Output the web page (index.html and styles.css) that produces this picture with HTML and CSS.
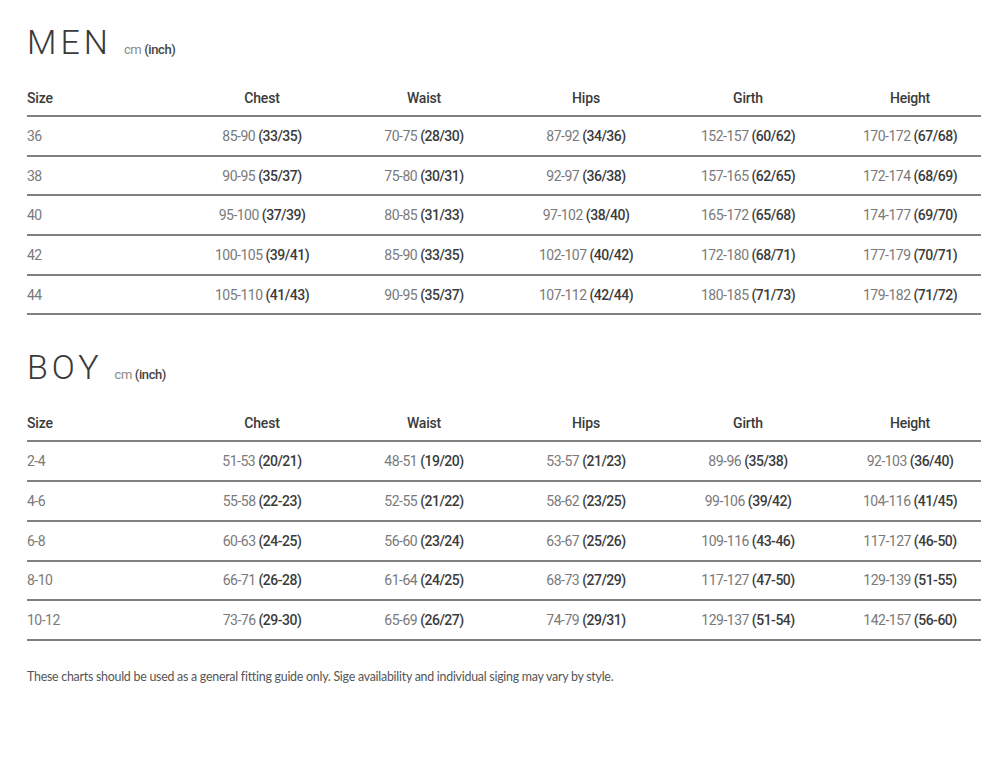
FILE: index.html
```html
<!DOCTYPE html>
<html>
<head>
<meta charset="utf-8">
<link rel="stylesheet" href="styles.css">
</head>
<body>
<div class="page">
  <section class="chart men">
    <h2 class="title"><span class="name">MEN</span><span class="unit">cm <b>(inch)</b></span></h2>
    <div class="table">
      <div class="row head"><div class="c size">Size</div><div class="c">Chest</div><div class="c">Waist</div><div class="c">Hips</div><div class="c">Girth</div><div class="c last">Height</div></div>
      <div class="row"><div class="c size">36</div><div class="c">85-90 <b>(33/35)</b></div><div class="c">70-75 <b>(28/30)</b></div><div class="c">87-92 <b>(34/36)</b></div><div class="c">152-157 <b>(60/62)</b></div><div class="c last">170-172 <b>(67/68)</b></div></div>
      <div class="row"><div class="c size">38</div><div class="c">90-95 <b>(35/37)</b></div><div class="c">75-80 <b>(30/31)</b></div><div class="c">92-97 <b>(36/38)</b></div><div class="c">157-165 <b>(62/65)</b></div><div class="c last">172-174 <b>(68/69)</b></div></div>
      <div class="row"><div class="c size">40</div><div class="c">95-100 <b>(37/39)</b></div><div class="c">80-85 <b>(31/33)</b></div><div class="c">97-102 <b>(38/40)</b></div><div class="c">165-172 <b>(65/68)</b></div><div class="c last">174-177 <b>(69/70)</b></div></div>
      <div class="row"><div class="c size">42</div><div class="c">100-105 <b>(39/41)</b></div><div class="c">85-90 <b>(33/35)</b></div><div class="c">102-107 <b>(40/42)</b></div><div class="c">172-180 <b>(68/71)</b></div><div class="c last">177-179 <b>(70/71)</b></div></div>
      <div class="row"><div class="c size">44</div><div class="c">105-110 <b>(41/43)</b></div><div class="c">90-95 <b>(35/37)</b></div><div class="c">107-112 <b>(42/44)</b></div><div class="c">180-185 <b>(71/73)</b></div><div class="c last">179-182 <b>(71/72)</b></div></div>
    </div>
  </section>
  <section class="chart boy">
    <h2 class="title"><span class="name">BOY</span><span class="unit">cm <b>(inch)</b></span></h2>
    <div class="table">
      <div class="row head"><div class="c size">Size</div><div class="c">Chest</div><div class="c">Waist</div><div class="c">Hips</div><div class="c">Girth</div><div class="c last">Height</div></div>
      <div class="row"><div class="c size">2-4</div><div class="c">51-53 <b>(20/21)</b></div><div class="c">48-51 <b>(19/20)</b></div><div class="c">53-57 <b>(21/23)</b></div><div class="c">89-96 <b>(35/38)</b></div><div class="c last">92-103 <b>(36/40)</b></div></div>
      <div class="row"><div class="c size">4-6</div><div class="c">55-58 <b>(22-23)</b></div><div class="c">52-55 <b>(21/22)</b></div><div class="c">58-62 <b>(23/25)</b></div><div class="c">99-106 <b>(39/42)</b></div><div class="c last">104-116 <b>(41/45)</b></div></div>
      <div class="row"><div class="c size">6-8</div><div class="c">60-63 <b>(24-25)</b></div><div class="c">56-60 <b>(23/24)</b></div><div class="c">63-67 <b>(25/26)</b></div><div class="c">109-116 <b>(43-46)</b></div><div class="c last">117-127 <b>(46-50)</b></div></div>
      <div class="row"><div class="c size">8-10</div><div class="c">66-71 <b>(26-28)</b></div><div class="c">61-64 <b>(24/25)</b></div><div class="c">68-73 <b>(27/29)</b></div><div class="c">117-127 <b>(47-50)</b></div><div class="c last">129-139 <b>(51-55)</b></div></div>
      <div class="row"><div class="c size">10-12</div><div class="c">73-76 <b>(29-30)</b></div><div class="c">65-69 <b>(26/27)</b></div><div class="c">74-79 <b>(29/31)</b></div><div class="c">129-137 <b>(51-54)</b></div><div class="c last">142-157 <b>(56-60)</b></div></div>
    </div>
  </section>
  <p class="note">These charts should be used as a general fitting guide only. Sige availability and individual siging may vary by style.</p>
</div>
</body>
</html>
```
FILE: styles.css
```css
html, body {
  margin: 0;
  padding: 0;
  background: #ffffff;
}
.page {
  width: 954px;
  padding: 22px 0 0 27px;
  font-family: Roboto, "Open Sans", sans-serif;
  color: #333;
}
.chart {
  margin: 0;
}
.boy {
  margin-top: 32px;
}
.title {
  margin: 0 0 18px 0;
  display: flex;
  align-items: baseline;
  font-weight: 300;
  height: 40px;
}
.name {
  font-family: Roboto, sans-serif;
  font-weight: 300;
  font-size: 34px;
  letter-spacing: 4px;
  color: #3a3a3a;
  line-height: 40px;
}
.unit {
  margin-left: 12px;
  font-size: 13px;
  color: #8a8a8a;
  font-weight: 400;
  letter-spacing: -0.4px;
}
.unit b {
  color: #444;
  font-weight: 500;
}
.table {
  display: flex;
  flex-direction: column;
}
.row {
  display: grid;
  grid-template-columns: 154px repeat(4, 162px) 152px;
  align-items: center;
  height: 37.7px;
  border-bottom: 2px solid #808080;
  font-size: 14px;
  color: #7a7a7a;
  letter-spacing: -0.5px;
}
.row.head {
  height: 35px;
  color: #3a3a3a;
  font-weight: 500;
  letter-spacing: -0.2px;
}
.c {
  text-align: center;
  white-space: nowrap;
}
.c.size {
  text-align: left;
}
.c.last {
  padding-left: 10px;
}
.c b {
  font-weight: 500;
  color: #3c3c3c;
}
.note {
  margin: 28px 0 0 0;
  font-family: Lato, sans-serif;
  font-size: 12.4px;
  color: #555;
  letter-spacing: -0.25px;
}
```
